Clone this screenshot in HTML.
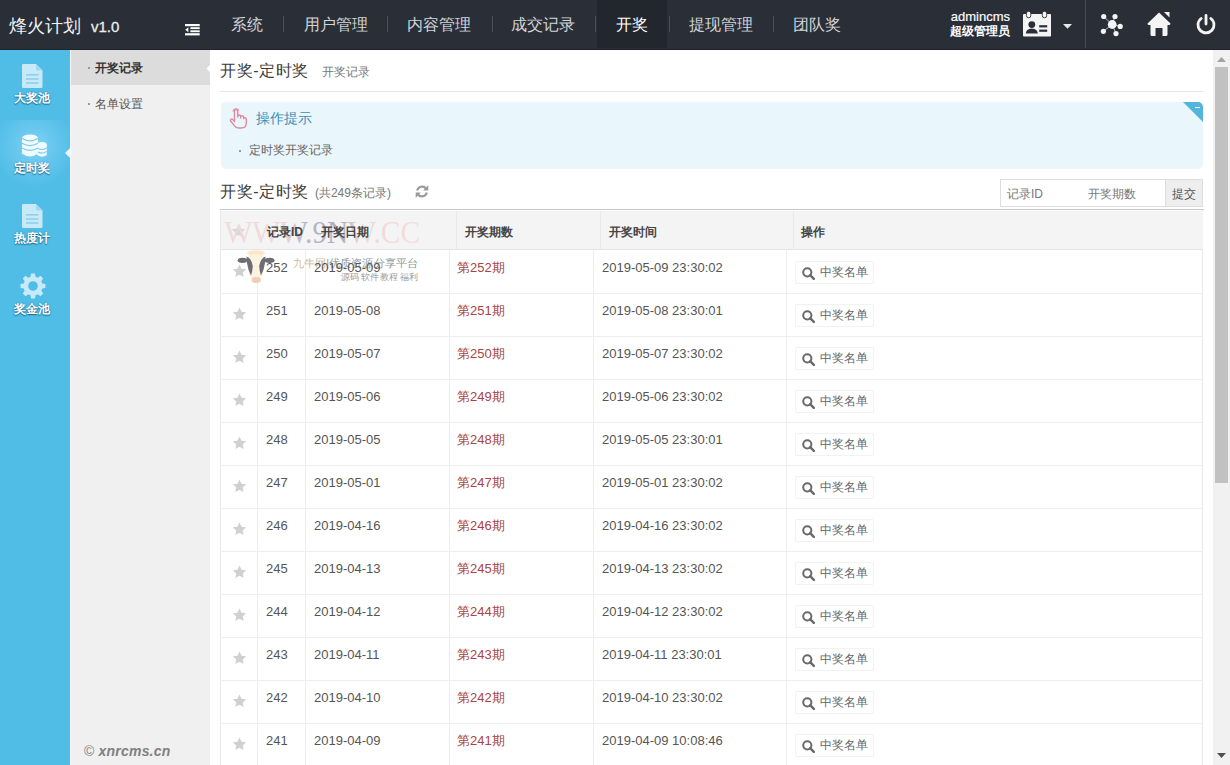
<!DOCTYPE html>
<html><head><meta charset="utf-8">
<style>
*{margin:0;padding:0;box-sizing:border-box}
html,body{width:1230px;height:765px;overflow:hidden;background:#fff;font-family:"Liberation Sans",sans-serif;color:#333}
.abs{position:absolute}
#hd{position:absolute;left:0;top:0;width:1230px;height:50px;background:#2a2f37;border-bottom:1px solid #20242a}
#logo{left:9px;top:14px;color:#f2f2f2;font-size:18px;white-space:nowrap;letter-spacing:0}
#logo span{font-size:15px;margin-left:10px;color:#ececec;-webkit-text-stroke:0.3px #ececec}
#nav{left:210px;top:0;height:49px}
#nav .it{position:absolute;top:0;height:48px;line-height:49px;color:#d2d5d9;font-size:15.6px;text-align:center}
#nav .sep{position:absolute;top:16px;width:1px;height:16px;background:#4a5058}
#nav .on{background:#22262d;color:#fff}
#s1{left:0;top:50px;width:70px;height:715px;background:#4fbde6}
#s1 .lb{position:absolute;left:-3px;width:70px;text-align:center;color:#fff;font-size:12px;font-weight:bold;line-height:16px;text-shadow:0 1px 1px rgba(0,40,70,.55),0 0 2px rgba(0,40,70,.35)}
#s1 .m{position:absolute;left:0;width:70px;height:70px;text-align:center;color:#fff;font-size:12px;font-weight:bold;text-shadow:0 1px 1px rgba(0,0,0,.35)}
#s1 .m .t{position:absolute;left:0;width:70px;text-align:center}
#s2{left:70px;top:50px;width:140px;height:715px;background:#f0f0f0;border-left:1px solid #f8fbfd}
#s2 .i{position:absolute;left:0;width:139px;height:35px;line-height:37px;font-size:12px;color:#555}
#s2 .i b{position:absolute;left:17px;top:17px;width:2px;height:2px;background:#999}
#s2 .i span{position:absolute;left:24px}
#s2 .on{background:#dcdcdc;color:#333;font-weight:bold}
#ct{left:210px;top:50px;width:1003px;height:715px;background:#fff}
#sb{left:1213px;top:50px;width:17px;height:715px;background:#f1f1f1}

#ct .ttl{position:absolute;left:10px;top:11px;font-size:16px;color:#3a3a3a;white-space:nowrap;line-height:20px;letter-spacing:0.6px}
#ct .ttl small{font-size:12px;color:#777;margin-left:13px;letter-spacing:0}
#ct .hl{position:absolute;left:10px;top:41px;width:983px;height:1px;background:#e5e5e5}
#tip{position:absolute;left:11px;top:52px;width:982px;height:67px;background:#e9f6fc;border-radius:5px;overflow:hidden}
#tip .cor{position:absolute;right:0;top:0;width:0;height:0;border-top:20px solid #52b5dc;border-left:20px solid transparent}
#tip .cor i{position:absolute;left:-8px;top:-15px;width:5px;height:1px;background:#fff}
#tip .h{position:absolute;left:35px;top:6px;font-size:14px;color:#3a8fb3;line-height:20px}
#tip .d{position:absolute;left:28px;top:39px;font-size:12px;color:#666;line-height:18px}
#tip .dot{position:absolute;left:18px;top:48px;width:2px;height:2px;background:#999}
#ct .t2{position:absolute;left:10px;top:132px;font-size:16px;color:#3a3a3a;white-space:nowrap;line-height:20px;letter-spacing:0.6px}
#ct .t2 small{font-size:12px;color:#777;margin-left:6px;letter-spacing:0}
#srch{position:absolute;left:790px;top:129px;width:203px;height:28px;border:1px solid #ddd;background:#fff}
#srch span{position:absolute;top:6px;font-size:12px;color:#777;line-height:16px}
#srch .btn{position:absolute;right:0;top:0;width:37px;height:26px;background:#eee;border-left:1px solid #ddd}
#tb{position:absolute;left:10px;top:159px;width:983px;height:560px;border-left:1px solid #e8e8e8;border-right:1px solid #e8e8e8}
#tb .top{position:absolute;left:-1px;top:0;width:984px;height:1px;background:#c8c8c8}
#tb .th{position:absolute;left:0;top:2px;width:982px;height:38.5px;background:#f4f4f4;border-bottom:1px solid #e6e6e6}
#tb .th span{position:absolute;z-index:3;top:13px;font-size:12px;font-weight:bold;color:#454545;line-height:16px}
.tr{position:absolute;left:220px;width:983px;height:43px;border-bottom:1px solid #eeeeee}
.vl{position:absolute;top:199px;width:1px;height:520px;background:#eeeeee}

.tr span{position:absolute;z-index:3;top:8px;font-size:13px;color:#555;line-height:18px;white-space:nowrap}
.tr .c1{left:46px}.tr .c2{left:94px}.tr .c3{left:237px;color:#a94442}.tr .c4{left:382px}
.tr .bt{left:575px;top:10px;width:79px;height:23px;border:1px solid #f2f2f2;border-radius:2px;font-size:12px;color:#666;padding-left:24px;line-height:21px}
.tr .bt svg{position:absolute;left:6px;top:5px}
.tr .st{position:absolute;left:12px;top:13px}
</style></head>
<body>
<div id="hd">
  <div id="logo" class="abs">烽火计划<span>v1.0</span></div>
  <svg class="abs" style="left:185px;top:24px" width="15" height="12" viewBox="0 0 15 12"><rect x="0" y="0" width="14.7" height="2.2" fill="#fff"/><rect x="5.4" y="3.2" width="9.3" height="1.9" fill="#fff"/><rect x="5.4" y="6.3" width="9.3" height="1.9" fill="#fff"/><polygon points="0.2,5.7 3.4,3.2 3.4,8.2" fill="#fff"/><rect x="0" y="9.2" width="14.7" height="2.2" fill="#fff"/></svg>
  <div id="nav" class="abs">
    <div class="it" style="left:0;width:73px">系统</div>
    <div class="sep" style="left:73px"></div>
    <div class="it" style="left:74px;width:103px">用户管理</div>
    <div class="sep" style="left:177px"></div>
    <div class="it" style="left:177px;width:104px">内容管理</div>
    <div class="sep" style="left:282px"></div>
    <div class="it" style="left:281px;width:103px">成交记录</div>
    <div class="sep" style="left:385px"></div>
    <div class="it on" style="left:387px;width:70px">开奖</div>
    <div class="sep" style="left:459px"></div>
    <div class="it" style="left:459px;width:103px">提现管理</div>
    <div class="sep" style="left:563px"></div>
    <div class="it" style="left:562px;width:89px">团队奖</div>
  </div>

  <div class="abs" style="left:900px;top:10px;width:110px;text-align:right;color:#fafafa;font-size:13px;line-height:14px;-webkit-text-stroke:0.2px #fafafa">admincms</div>
  <div class="abs" style="left:900px;top:24px;width:110px;text-align:right;color:#fff;font-size:12px;font-weight:bold;line-height:15px">超级管理员</div>
  <svg class="abs" style="left:1020px;top:9px" width="34" height="30" viewBox="1020 9 34 30"><path d="M1023 15 Q1023 14 1024 14 H1050 Q1051 14 1051 15 V35.6 Q1051 36.6 1050 36.6 H1024 Q1023 36.6 1023 35.6Z" fill="#f4f4f4"/><rect x="1026.4" y="11.2" width="4.4" height="6.6" rx="2.2" fill="#f4f4f4" stroke="#2a2f37" stroke-width="0.9"/><rect x="1042.3" y="11.2" width="4.4" height="6.6" rx="2.2" fill="#f4f4f4" stroke="#2a2f37" stroke-width="0.9"/><circle cx="1031.8" cy="24.6" r="3.4" fill="#2a2f37"/><path d="M1025.8 33.6 Q1026 28.6 1031.8 28.4 Q1037.6 28.6 1037.8 33.6Z" fill="#2a2f37"/><rect x="1039.2" y="25.2" width="8" height="2.2" fill="#2a2f37"/><rect x="1039.2" y="29.6" width="8" height="2.2" fill="#2a2f37"/></svg>
  <svg class="abs" style="left:1063px;top:24px" width="9" height="5" viewBox="0 0 9 5"><polygon points="0,0 9,0 4.5,4.8" fill="#e8e8e8"/></svg>
  <div class="abs" style="left:1085px;top:0;width:1px;height:48px;background:#474c54"></div>
  <svg class="abs" style="left:1100px;top:13px" width="24" height="24" viewBox="0 0 24 24"><g stroke="#f4f4f4" stroke-width="0.7"><line x1="3.7" y1="3.5" x2="12.2" y2="11.5"/><line x1="15" y1="3.5" x2="12.2" y2="11.5"/><line x1="20.2" y1="13.4" x2="12.2" y2="11.5"/><line x1="16" y1="20.6" x2="12.2" y2="11.5"/><line x1="3.4" y1="18.3" x2="12.2" y2="11.5"/></g><g fill="#f4f4f4"><circle cx="12.2" cy="11.5" r="4.4"/><circle cx="3.7" cy="3.5" r="2.6"/><circle cx="15" cy="3.5" r="2.6"/><circle cx="20.2" cy="13.4" r="2.6"/><circle cx="16" cy="20.6" r="2.6"/><circle cx="3.4" cy="18.3" r="2.6"/></g></svg>
  <svg class="abs" style="left:1147px;top:11px" width="24" height="26" viewBox="0 0 24 26"><path d="M12 1.5 L23.5 12.5 Q23.5 14 22 14 H20.5 V23.5 Q20.5 25 19 25 H15.5 V17 H8.5 V25 H5 Q3.5 25 3.5 23.5 V14 H2 Q0.5 14 0.5 12.5 Z" fill="#f4f4f4"/><polygon points="17,1 22.5,1 22.5,6.5" fill="#f4f4f4"/></svg>
  <svg class="abs" style="left:1196px;top:14px" width="20" height="21" viewBox="0 0 20 21"><path d="M5.2 4.5 A8 8 0 1 0 14.8 4.5" fill="none" stroke="#f4f4f4" stroke-width="2.8" stroke-linecap="round"/><line x1="10" y1="1.5" x2="10" y2="10" stroke="#f4f4f4" stroke-width="2.8" stroke-linecap="round"/></svg>
</div>
<div id="s1" class="abs">
  <div style="position:absolute;left:0;top:70px;width:70px;height:70px;background:radial-gradient(ellipse 42px 42px at 34px 26px,#86d3f2 0%,#68c7ee 45%,#4fbde6 100%)"></div>
  <svg style="position:absolute;left:65px;top:98px" width="5" height="10" viewBox="0 0 5 10"><polygon points="5,0 0,5 5,10" fill="#f0f0f0"/></svg>
  <svg style="position:absolute;left:22px;top:14px" width="21" height="24" viewBox="0 0 21 24"><path d="M0 1.2 Q0 0 1.2 0 H14 L20.5 6.5 V22.8 Q20.5 24 19.3 24 H1.2 Q0 24 0 22.8 Z" fill="#c8eaf8"/><path d="M14 0 V5.2 Q14 6.5 15.3 6.5 H20.5" fill="#9fd8f0"/><rect x="4" y="10" width="12.5" height="1.6" fill="#8fd0ec"/><rect x="4" y="14.2" width="12.5" height="1.6" fill="#8fd0ec"/><rect x="4" y="18.2" width="12.5" height="1.6" fill="#8fd0ec"/></svg>
  <div class="lb" style="top:40px">大奖池</div>
  <svg style="position:absolute;left:21px;top:84px" width="26" height="24" viewBox="0 0 26 24"><g fill="#f0fbff">
    <ellipse cx="21" cy="10.5" rx="4.8" ry="2.6"/><path d="M16.2 10.5 V21 Q21 24.5 25.8 21 V10.5 Q21 14 16.2 10.5Z"/>
    <ellipse cx="9" cy="4" rx="8" ry="3.6"/><path d="M1 4.2 V19.5 Q9 25.5 17 19.5 V4.2 Q9 10 1 4.2Z"/></g>
    <g fill="none" stroke="#7fcbe9" stroke-width="1.1"><path d="M1 9.2 Q9 14 17 9.2"/><path d="M1 14 Q9 18.8 17 14"/><path d="M17 18 Q21 20.4 25.8 17.5"/><path d="M17 14.5 Q21 16.8 25.8 14"/><path d="M1 4.2 Q9 9.5 17 4.2"/></g></svg>
  <div class="lb" style="top:110px">定时奖</div>
  <svg style="position:absolute;left:22px;top:154px" width="21" height="24" viewBox="0 0 21 24"><path d="M0 1.2 Q0 0 1.2 0 H14 L20.5 6.5 V22.8 Q20.5 24 19.3 24 H1.2 Q0 24 0 22.8 Z" fill="#c8eaf8"/><path d="M14 0 V5.2 Q14 6.5 15.3 6.5 H20.5" fill="#9fd8f0"/><rect x="4" y="10" width="12.5" height="1.6" fill="#8fd0ec"/><rect x="4" y="14.2" width="12.5" height="1.6" fill="#8fd0ec"/><rect x="4" y="18.2" width="12.5" height="1.6" fill="#8fd0ec"/></svg>
  <div class="lb" style="top:180px">热度计</div>
  <svg style="position:absolute;left:20px;top:223px" width="26" height="26" viewBox="-13 -13 26 26"><path fill="#c8eaf8" fill-rule="evenodd" d="M-2.47 -9.28 L-2.01 -12.44 L2.01 -12.44 L2.47 -9.28 L4.81 -8.31 L7.38 -10.22 L10.22 -7.38 L8.31 -4.81 L9.28 -2.47 L12.44 -2.01 L12.44 2.01 L9.28 2.47 L8.31 4.81 L10.22 7.38 L7.38 10.22 L4.81 8.31 L2.47 9.28 L2.01 12.44 L-2.01 12.44 L-2.47 9.28 L-4.81 8.31 L-7.38 10.22 L-10.22 7.38 L-8.31 4.81 L-9.28 2.47 L-12.44 2.01 L-12.44 -2.01 L-9.28 -2.47 L-8.31 -4.81 L-10.22 -7.38 L-7.38 -10.22 L-4.81 -8.31Z M4.8 0 A4.8 4.8 0 1 0 -4.8 0 A4.8 4.8 0 1 0 4.8 0Z"/></svg>
  <div class="lb" style="top:251px">奖金池</div>
</div>
<div id="s2" class="abs">
  <div class="i on" style="top:0"><b></b><span>开奖记录</span></div>
  <svg style="position:absolute;left:135px;top:14px" width="5" height="9" viewBox="0 0 5 9"><polygon points="5,0 0.5,4.5 5,9" fill="#fff"/></svg>
  <div class="i" style="top:36px"><b></b><span>名单设置</span></div>
  <div style="position:absolute;left:13px;top:693px;font-size:14px;font-style:italic;font-weight:bold;color:#808080;white-space:nowrap;line-height:16px;letter-spacing:0.2px"><span style="font-weight:normal;font-style:normal">&copy;</span> xnrcms.cn</div>
</div>
<div id="ct" class="abs">
  <div class="ttl">开奖-定时奖<small>开奖记录</small></div>
  <div class="hl"></div>
  <div id="tip"><div class="cor"><i></i></div>
    <svg style="position:absolute;left:8px;top:6px" width="18" height="21" viewBox="0 0 18 21"><path d="M5.5 13 V3.2 a1.6 1.6 0 0 1 3.2 0 V9 M8.7 8.5 a1.5 1.5 0 0 1 3 0 V10 M11.7 9.3 a1.5 1.5 0 0 1 3 0 V10.8 M14.7 10.5 a1.4 1.4 0 0 1 2.6 0.4 V15 c0 3 -2 5 -5 5 H9.5 c-2 0 -3.2 -1 -4.4 -2.6 L1.6 13 a1.3 1.3 0 0 1 2 -1.6 L5.5 13.5" fill="none" stroke="#e48a9f" stroke-width="1.4" stroke-linejoin="round" stroke-linecap="round"/><path d="M4 3.5 a3.2 3.2 0 0 1 6 -1" fill="none" stroke="#e48a9f" stroke-width="1.2"/></svg>
    <div class="h">操作提示</div>
    <i class="dot"></i><div class="d">定时奖开奖记录</div>
  </div>
  <div class="t2">开奖-定时奖<small>(共249条记录)</small></div>
  <svg style="position:absolute;left:205px;top:135px" width="14" height="13" viewBox="0 0 14 13"><path d="M2.2 5.5 A5 5 0 0 1 11 3.5" fill="none" stroke="#9a9a9a" stroke-width="2.2"/><polygon points="13.3,0.3 13.3,5.6 8.2,5.6" fill="#9a9a9a"/><path d="M11.8 7.5 A5 5 0 0 1 3 9.5" fill="none" stroke="#9a9a9a" stroke-width="2.2"/><polygon points="0.7,12.7 0.7,7.4 5.8,7.4" fill="#9a9a9a"/></svg>
  <div id="srch"><span style="left:6px">记录ID</span><span style="left:87px">开奖期数</span><div class="btn"><span style="left:6px;color:#555">提交</span></div></div>
  <div id="tb"><div class="top"></div><div class="th">
    <svg style="position:absolute;left:10px;top:13px" width="15" height="14" viewBox="0 0 24 23"><path d="M12 0.8l3.3 7 7.6 0.9-5.6 5.2 1.5 7.6L12 17.8l-6.8 3.7 1.5-7.6L1.1 8.7l7.6-0.9z" fill="#d6d6d6"/></svg>
    <i style="position:absolute;left:235px;top:0;width:1px;height:38px;background:#e9e9e9"></i><i style="position:absolute;left:379px;top:0;width:1px;height:38px;background:#e9e9e9"></i><i style="position:absolute;left:572px;top:0;width:1px;height:38px;background:#e9e9e9"></i><span style="left:46px">记录ID</span><span style="left:100px">开奖日期</span><span style="left:244px">开奖期数</span><span style="left:388px">开奖时间</span><span style="left:580px">操作</span>
  </div></div>
</div>
<div id="rows" class="abs" style="left:0;top:0">
<div class="tr" style="top:251px"><svg class="st" width="15" height="14" viewBox="0 0 24 23"><path d="M12 0.8l3.3 7 7.6 0.9-5.6 5.2 1.5 7.6L12 17.8l-6.8 3.7 1.5-7.6L1.1 8.7l7.6-0.9z" fill="#d0d0d0"/></svg><span class="c1">252</span><span class="c2">2019-05-09</span><span class="c3">第252期</span><span class="c4">2019-05-09 23:30:02</span><span class="bt"><svg width="13" height="13" viewBox="0 0 13 13"><circle cx="5.3" cy="5.3" r="4.1" fill="none" stroke="#6a6a6a" stroke-width="2"/><line x1="8.2" y1="8.2" x2="11.8" y2="11.8" stroke="#6a6a6a" stroke-width="2.4" stroke-linecap="round"/></svg>中奖名单</span></div>
<div class="tr" style="top:294px"><svg class="st" width="15" height="14" viewBox="0 0 24 23"><path d="M12 0.8l3.3 7 7.6 0.9-5.6 5.2 1.5 7.6L12 17.8l-6.8 3.7 1.5-7.6L1.1 8.7l7.6-0.9z" fill="#d0d0d0"/></svg><span class="c1">251</span><span class="c2">2019-05-08</span><span class="c3">第251期</span><span class="c4">2019-05-08 23:30:01</span><span class="bt"><svg width="13" height="13" viewBox="0 0 13 13"><circle cx="5.3" cy="5.3" r="4.1" fill="none" stroke="#6a6a6a" stroke-width="2"/><line x1="8.2" y1="8.2" x2="11.8" y2="11.8" stroke="#6a6a6a" stroke-width="2.4" stroke-linecap="round"/></svg>中奖名单</span></div>
<div class="tr" style="top:337px"><svg class="st" width="15" height="14" viewBox="0 0 24 23"><path d="M12 0.8l3.3 7 7.6 0.9-5.6 5.2 1.5 7.6L12 17.8l-6.8 3.7 1.5-7.6L1.1 8.7l7.6-0.9z" fill="#d0d0d0"/></svg><span class="c1">250</span><span class="c2">2019-05-07</span><span class="c3">第250期</span><span class="c4">2019-05-07 23:30:02</span><span class="bt"><svg width="13" height="13" viewBox="0 0 13 13"><circle cx="5.3" cy="5.3" r="4.1" fill="none" stroke="#6a6a6a" stroke-width="2"/><line x1="8.2" y1="8.2" x2="11.8" y2="11.8" stroke="#6a6a6a" stroke-width="2.4" stroke-linecap="round"/></svg>中奖名单</span></div>
<div class="tr" style="top:380px"><svg class="st" width="15" height="14" viewBox="0 0 24 23"><path d="M12 0.8l3.3 7 7.6 0.9-5.6 5.2 1.5 7.6L12 17.8l-6.8 3.7 1.5-7.6L1.1 8.7l7.6-0.9z" fill="#d0d0d0"/></svg><span class="c1">249</span><span class="c2">2019-05-06</span><span class="c3">第249期</span><span class="c4">2019-05-06 23:30:02</span><span class="bt"><svg width="13" height="13" viewBox="0 0 13 13"><circle cx="5.3" cy="5.3" r="4.1" fill="none" stroke="#6a6a6a" stroke-width="2"/><line x1="8.2" y1="8.2" x2="11.8" y2="11.8" stroke="#6a6a6a" stroke-width="2.4" stroke-linecap="round"/></svg>中奖名单</span></div>
<div class="tr" style="top:423px"><svg class="st" width="15" height="14" viewBox="0 0 24 23"><path d="M12 0.8l3.3 7 7.6 0.9-5.6 5.2 1.5 7.6L12 17.8l-6.8 3.7 1.5-7.6L1.1 8.7l7.6-0.9z" fill="#d0d0d0"/></svg><span class="c1">248</span><span class="c2">2019-05-05</span><span class="c3">第248期</span><span class="c4">2019-05-05 23:30:01</span><span class="bt"><svg width="13" height="13" viewBox="0 0 13 13"><circle cx="5.3" cy="5.3" r="4.1" fill="none" stroke="#6a6a6a" stroke-width="2"/><line x1="8.2" y1="8.2" x2="11.8" y2="11.8" stroke="#6a6a6a" stroke-width="2.4" stroke-linecap="round"/></svg>中奖名单</span></div>
<div class="tr" style="top:466px"><svg class="st" width="15" height="14" viewBox="0 0 24 23"><path d="M12 0.8l3.3 7 7.6 0.9-5.6 5.2 1.5 7.6L12 17.8l-6.8 3.7 1.5-7.6L1.1 8.7l7.6-0.9z" fill="#d0d0d0"/></svg><span class="c1">247</span><span class="c2">2019-05-01</span><span class="c3">第247期</span><span class="c4">2019-05-01 23:30:02</span><span class="bt"><svg width="13" height="13" viewBox="0 0 13 13"><circle cx="5.3" cy="5.3" r="4.1" fill="none" stroke="#6a6a6a" stroke-width="2"/><line x1="8.2" y1="8.2" x2="11.8" y2="11.8" stroke="#6a6a6a" stroke-width="2.4" stroke-linecap="round"/></svg>中奖名单</span></div>
<div class="tr" style="top:509px"><svg class="st" width="15" height="14" viewBox="0 0 24 23"><path d="M12 0.8l3.3 7 7.6 0.9-5.6 5.2 1.5 7.6L12 17.8l-6.8 3.7 1.5-7.6L1.1 8.7l7.6-0.9z" fill="#d0d0d0"/></svg><span class="c1">246</span><span class="c2">2019-04-16</span><span class="c3">第246期</span><span class="c4">2019-04-16 23:30:02</span><span class="bt"><svg width="13" height="13" viewBox="0 0 13 13"><circle cx="5.3" cy="5.3" r="4.1" fill="none" stroke="#6a6a6a" stroke-width="2"/><line x1="8.2" y1="8.2" x2="11.8" y2="11.8" stroke="#6a6a6a" stroke-width="2.4" stroke-linecap="round"/></svg>中奖名单</span></div>
<div class="tr" style="top:552px"><svg class="st" width="15" height="14" viewBox="0 0 24 23"><path d="M12 0.8l3.3 7 7.6 0.9-5.6 5.2 1.5 7.6L12 17.8l-6.8 3.7 1.5-7.6L1.1 8.7l7.6-0.9z" fill="#d0d0d0"/></svg><span class="c1">245</span><span class="c2">2019-04-13</span><span class="c3">第245期</span><span class="c4">2019-04-13 23:30:02</span><span class="bt"><svg width="13" height="13" viewBox="0 0 13 13"><circle cx="5.3" cy="5.3" r="4.1" fill="none" stroke="#6a6a6a" stroke-width="2"/><line x1="8.2" y1="8.2" x2="11.8" y2="11.8" stroke="#6a6a6a" stroke-width="2.4" stroke-linecap="round"/></svg>中奖名单</span></div>
<div class="tr" style="top:595px"><svg class="st" width="15" height="14" viewBox="0 0 24 23"><path d="M12 0.8l3.3 7 7.6 0.9-5.6 5.2 1.5 7.6L12 17.8l-6.8 3.7 1.5-7.6L1.1 8.7l7.6-0.9z" fill="#d0d0d0"/></svg><span class="c1">244</span><span class="c2">2019-04-12</span><span class="c3">第244期</span><span class="c4">2019-04-12 23:30:02</span><span class="bt"><svg width="13" height="13" viewBox="0 0 13 13"><circle cx="5.3" cy="5.3" r="4.1" fill="none" stroke="#6a6a6a" stroke-width="2"/><line x1="8.2" y1="8.2" x2="11.8" y2="11.8" stroke="#6a6a6a" stroke-width="2.4" stroke-linecap="round"/></svg>中奖名单</span></div>
<div class="tr" style="top:638px"><svg class="st" width="15" height="14" viewBox="0 0 24 23"><path d="M12 0.8l3.3 7 7.6 0.9-5.6 5.2 1.5 7.6L12 17.8l-6.8 3.7 1.5-7.6L1.1 8.7l7.6-0.9z" fill="#d0d0d0"/></svg><span class="c1">243</span><span class="c2">2019-04-11</span><span class="c3">第243期</span><span class="c4">2019-04-11 23:30:01</span><span class="bt"><svg width="13" height="13" viewBox="0 0 13 13"><circle cx="5.3" cy="5.3" r="4.1" fill="none" stroke="#6a6a6a" stroke-width="2"/><line x1="8.2" y1="8.2" x2="11.8" y2="11.8" stroke="#6a6a6a" stroke-width="2.4" stroke-linecap="round"/></svg>中奖名单</span></div>
<div class="tr" style="top:681px"><svg class="st" width="15" height="14" viewBox="0 0 24 23"><path d="M12 0.8l3.3 7 7.6 0.9-5.6 5.2 1.5 7.6L12 17.8l-6.8 3.7 1.5-7.6L1.1 8.7l7.6-0.9z" fill="#d0d0d0"/></svg><span class="c1">242</span><span class="c2">2019-04-10</span><span class="c3">第242期</span><span class="c4">2019-04-10 23:30:02</span><span class="bt"><svg width="13" height="13" viewBox="0 0 13 13"><circle cx="5.3" cy="5.3" r="4.1" fill="none" stroke="#6a6a6a" stroke-width="2"/><line x1="8.2" y1="8.2" x2="11.8" y2="11.8" stroke="#6a6a6a" stroke-width="2.4" stroke-linecap="round"/></svg>中奖名单</span></div>
<div class="tr" style="top:724px"><svg class="st" width="15" height="14" viewBox="0 0 24 23"><path d="M12 0.8l3.3 7 7.6 0.9-5.6 5.2 1.5 7.6L12 17.8l-6.8 3.7 1.5-7.6L1.1 8.7l7.6-0.9z" fill="#d0d0d0"/></svg><span class="c1">241</span><span class="c2">2019-04-09</span><span class="c3">第241期</span><span class="c4">2019-04-09 10:08:46</span><span class="bt"><svg width="13" height="13" viewBox="0 0 13 13"><circle cx="5.3" cy="5.3" r="4.1" fill="none" stroke="#6a6a6a" stroke-width="2"/><line x1="8.2" y1="8.2" x2="11.8" y2="11.8" stroke="#6a6a6a" stroke-width="2.4" stroke-linecap="round"/></svg>中奖名单</span></div>
<div class="vl" style="left:257px;top:250px"></div><div class="vl" style="left:305px;top:250px"></div><div class="vl" style="left:449px;top:250px"></div><div class="vl" style="left:593px;top:250px"></div><div class="vl" style="left:786px;top:250px"></div>
</div>

<div id="sb" class="abs"><svg style="position:absolute;left:4px;top:7px" width="9" height="5" viewBox="0 0 9 5"><polygon points="0,5 9,5 4.5,0" fill="#a3a3a3"/></svg><div style="position:absolute;left:2px;top:17px;width:13px;height:416px;background:#c1c1c1"></div><svg style="position:absolute;left:4px;top:703px" width="9" height="5" viewBox="0 0 9 5"><polygon points="0,0 9,0 4.5,5" fill="#505050"/></svg></div>
<svg class="abs" style="left:222px;top:212px" width="210" height="75" viewBox="222 212 210 75">
 <defs><linearGradient id="wg" x1="224" x2="420" y1="0" y2="0" gradientUnits="userSpaceOnUse">
  <stop offset="0" stop-color="#f1dcdc"/><stop offset="0.3" stop-color="#ecdadc"/><stop offset="0.4" stop-color="#b9b9c9"/><stop offset="0.6" stop-color="#adadbd"/><stop offset="0.7" stop-color="#eed9da"/><stop offset="1" stop-color="#f2dede"/></linearGradient></defs>
 <text x="224.5" y="243" font-family="Liberation Serif" font-size="32" fill="url(#wg)" textLength="195.5" lengthAdjust="spacingAndGlyphs">WWW.9NW.CC</text>
 <ellipse cx="256" cy="253" rx="9" ry="2.8" fill="#fde6c6"/>
 <path d="M248 256 Q256 252 264 256 L262.5 276 Q256 283 249.5 276Z" fill="#fbf2e2"/>
 <ellipse cx="242.5" cy="260.3" rx="4.8" ry="2.6" fill="#6d6d75"/>
 <ellipse cx="269.5" cy="260.3" rx="5" ry="2.6" fill="#6d6d75"/>
 <path d="M246.5 256.5 Q251.5 258 252.8 266 Q252.5 272 251 275.5 Q248 270 247 263Z" fill="#6d6d75"/>
 <path d="M265.5 256.5 Q260.5 258 259.2 266 Q259.5 272 261 275.5 Q264 270 265 263Z" fill="#6d6d75"/>
 <ellipse cx="256.2" cy="280" rx="4.8" ry="3" fill="#f5cdb6"/>
 <text x="293" y="266.6" font-size="10.8" font-family="Liberation Sans" textLength="125" lengthAdjust="spacingAndGlyphs"><tspan fill="#cdbba3">九牛网</tspan><tspan fill="#8a9898">|优质资源分享平台</tspan></text>
 <g font-size="8.6" font-family="Liberation Sans" fill="#9a9a9a"><text x="341" y="280">源码</text><text x="360.5" y="280">软件</text><text x="380" y="280">教程</text><text x="399.5" y="280">福利</text></g>
</svg>
</body></html>
